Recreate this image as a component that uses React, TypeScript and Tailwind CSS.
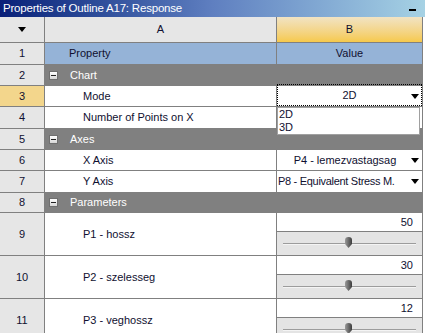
import React from 'react'

const font = { fontFamily: '"Liberation Sans", Arial, sans-serif' }

function Arrow() {
  return (
    <svg width="8" height="5" viewBox="0 0 8 5" className="shrink-0">
      <path d="M0 0h8L4 5z" fill="#000" />
    </svg>
  )
}

function MinusBox() {
  return (
    <div className="w-[9px] h-[9px] border border-[#6f6f6f] bg-gradient-to-b from-[#ffffff] to-[#d6d6d6] flex items-center justify-center">
      <div className="w-[5px] h-px bg-[#222]" />
    </div>
  )
}

function Thumb() {
  return (
    <svg width="9" height="11" viewBox="0 0 9 11">
      <defs>
        <linearGradient id="tg" x1="0" y1="0" x2="1" y2="0">
          <stop offset="0" stopColor="#9a9a9a" />
          <stop offset="0.5" stopColor="#6c6c6c" />
          <stop offset="1" stopColor="#3c3c3c" />
        </linearGradient>
      </defs>
      <path d="M1 3Q1 0 4.5 0Q8 0 8 3V7L4.5 11L1 7Z" fill="url(#tg)" />
    </svg>
  )
}

function NumCell({ n, h, active }: { n: string; h: string; active?: boolean }) {
  return (
    <div
      className={`w-[45px] shrink-0 border-r border-[#808080] flex items-center justify-center text-[11px] text-[#101030] ${h} ${
        active ? 'bg-[#f3d68c]' : 'bg-[#e6e6e6]'
      }`}
    >
      {n}
    </div>
  )
}

function GroupRow({ n, label, h }: { n: string; label: string; h: string }) {
  return (
    <div className="flex border-b border-[#808080]">
      <NumCell n={n} h={h} />
      <div className={`flex-1 bg-[#808080] flex items-center pl-[4px] gap-[12px] text-white text-[11px] ${h}`}>
        <MinusBox />
        <span>{label}</span>
      </div>
    </div>
  )
}

function PropRow({
  n,
  label,
  h,
  active,
  children,
}: {
  n: string
  label: string
  h: string
  active?: boolean
  children?: React.ReactNode
}) {
  return (
    <div className="flex border-b border-[#808080]">
      <NumCell n={n} h={h} active={active} />
      <div className={`w-[232px] shrink-0 border-r border-[#808080] bg-white flex items-center pl-[38px] text-[11px] text-[#101030] ${h}`}>
        {label}
      </div>
      <div className={`w-[145px] shrink-0 bg-white relative ${h}`}>{children}</div>
    </div>
  )
}

function SliderRow({ n, label, value, pos }: { n: string; label: string; value: string; pos: number }) {
  return (
    <div className="flex border-b border-[#808080]">
      <NumCell n={n} h="h-[42px]" />
      <div className="w-[232px] shrink-0 border-r border-[#808080] bg-white flex items-center pl-[38px] text-[11px] text-[#101030] h-[42px]">
        {label}
      </div>
      <div className="w-[145px] shrink-0 flex flex-col h-[42px]">
        <div className="h-[19px] bg-white border-b border-[#808080] flex items-center justify-end pr-[9px] text-[11px] text-[#101030]">
          {value}
        </div>
        <div className="flex-1 bg-[#e4e4e4] relative px-[6px] flex items-center">
          <div className="w-full h-[2px] bg-[#9c9c9c] border-b border-[#f4f4f4]" />
          <div className="absolute top-[5px]" style={{ left: `${pos}px` }}>
            <Thumb />
          </div>
        </div>
      </div>
    </div>
  )
}

export default function App() {
  return (
    <div className="w-[425px] h-[333px] overflow-hidden bg-white" style={font}>
      <div className="h-[17px] bg-gradient-to-r from-[#0a1f78] via-[#5f7fc0] to-[#a6d2e4] flex items-center justify-between pl-[3px] pr-[9px]">
        <span className="text-white text-[11.5px] leading-none tracking-[-0.2px]">Properties of Outline A17: Response</span>
        <div className="w-[7px] h-[2px] bg-black mt-[3px]" />
      </div>
      <div className="w-[423px] border-r border-[#808080]">
        <div className="flex border-b border-[#808080] h-[26px]">
          <div className="w-[45px] shrink-0 border-r border-[#808080] bg-[#e6e6e6] flex items-center justify-center">
            <Arrow />
          </div>
          <div className="w-[232px] shrink-0 border-r border-[#808080] bg-[#e6e6e6] flex items-center justify-center text-[11px] text-[#101030]">
            A
          </div>
          <div className="flex-1 bg-gradient-to-b from-[#f1e3c3] to-[#f6c94a] flex items-center justify-center text-[11px] text-[#101030]">
            B
          </div>
        </div>
        <div className="flex border-b border-[#808080]">
          <NumCell n="1" h="h-[21px]" />
          <div className="w-[232px] shrink-0 border-r border-[#808080] bg-[#95b3d7] flex items-center pl-[24px] text-[11px] text-[#101030] h-[21px]">
            Property
          </div>
          <div className="flex-1 bg-[#95b3d7] flex items-center justify-center text-[11px] text-[#101030] h-[21px]">
            Value
          </div>
        </div>
        <GroupRow n="2" label="Chart" h="h-[20px]" />
        <PropRow n="3" label="Mode" h="h-[20px]" active>
          <div className="absolute inset-x-0 top-[-2px] bottom-0 border border-dotted border-black flex items-center justify-center">
            <span className="text-[11px] text-[#101030]">2D</span>
            <div className="absolute right-[2px] top-[9px]">
              <Arrow />
            </div>
          </div>
          <div className="absolute left-0 top-[21px] w-[143px] h-[28px] bg-white border border-[#a0a0a0] z-10 flex flex-col pl-[1px] text-[11px] leading-[13px] text-[#101030]">
            <span>2D</span>
            <span>3D</span>
          </div>
        </PropRow>
        <PropRow n="4" label="Number of Points on X" h="h-[21px]" />
        <GroupRow n="5" label="Axes" h="h-[20px]" />
        <PropRow n="6" label="X Axis" h="h-[20px]">
          <div className="h-full flex items-center pl-[2px] pr-[3px]">
            <span className="flex-1 text-center text-[11px] text-[#101030] whitespace-nowrap">P4 - lemezvastagsag</span>
            <Arrow />
          </div>
        </PropRow>
        <PropRow n="7" label="Y Axis" h="h-[21px]">
          <div className="h-full flex items-center pl-[1px] pr-[3px]">
            <span className="flex-1 text-[11px] text-[#101030] whitespace-nowrap tracking-[-0.3px]">P8 - Equivalent Stress M.</span>
            <Arrow />
          </div>
        </PropRow>
        <GroupRow n="8" label="Parameters" h="h-[19px]" />
        <SliderRow n="9" label="P1 - hossz" value="50" pos={67} />
        <SliderRow n="10" label="P2 - szelesseg" value="30" pos={67} />
        <SliderRow n="11" label="P3 - veghossz" value="12" pos={67} />
      </div>
    </div>
  )
}
